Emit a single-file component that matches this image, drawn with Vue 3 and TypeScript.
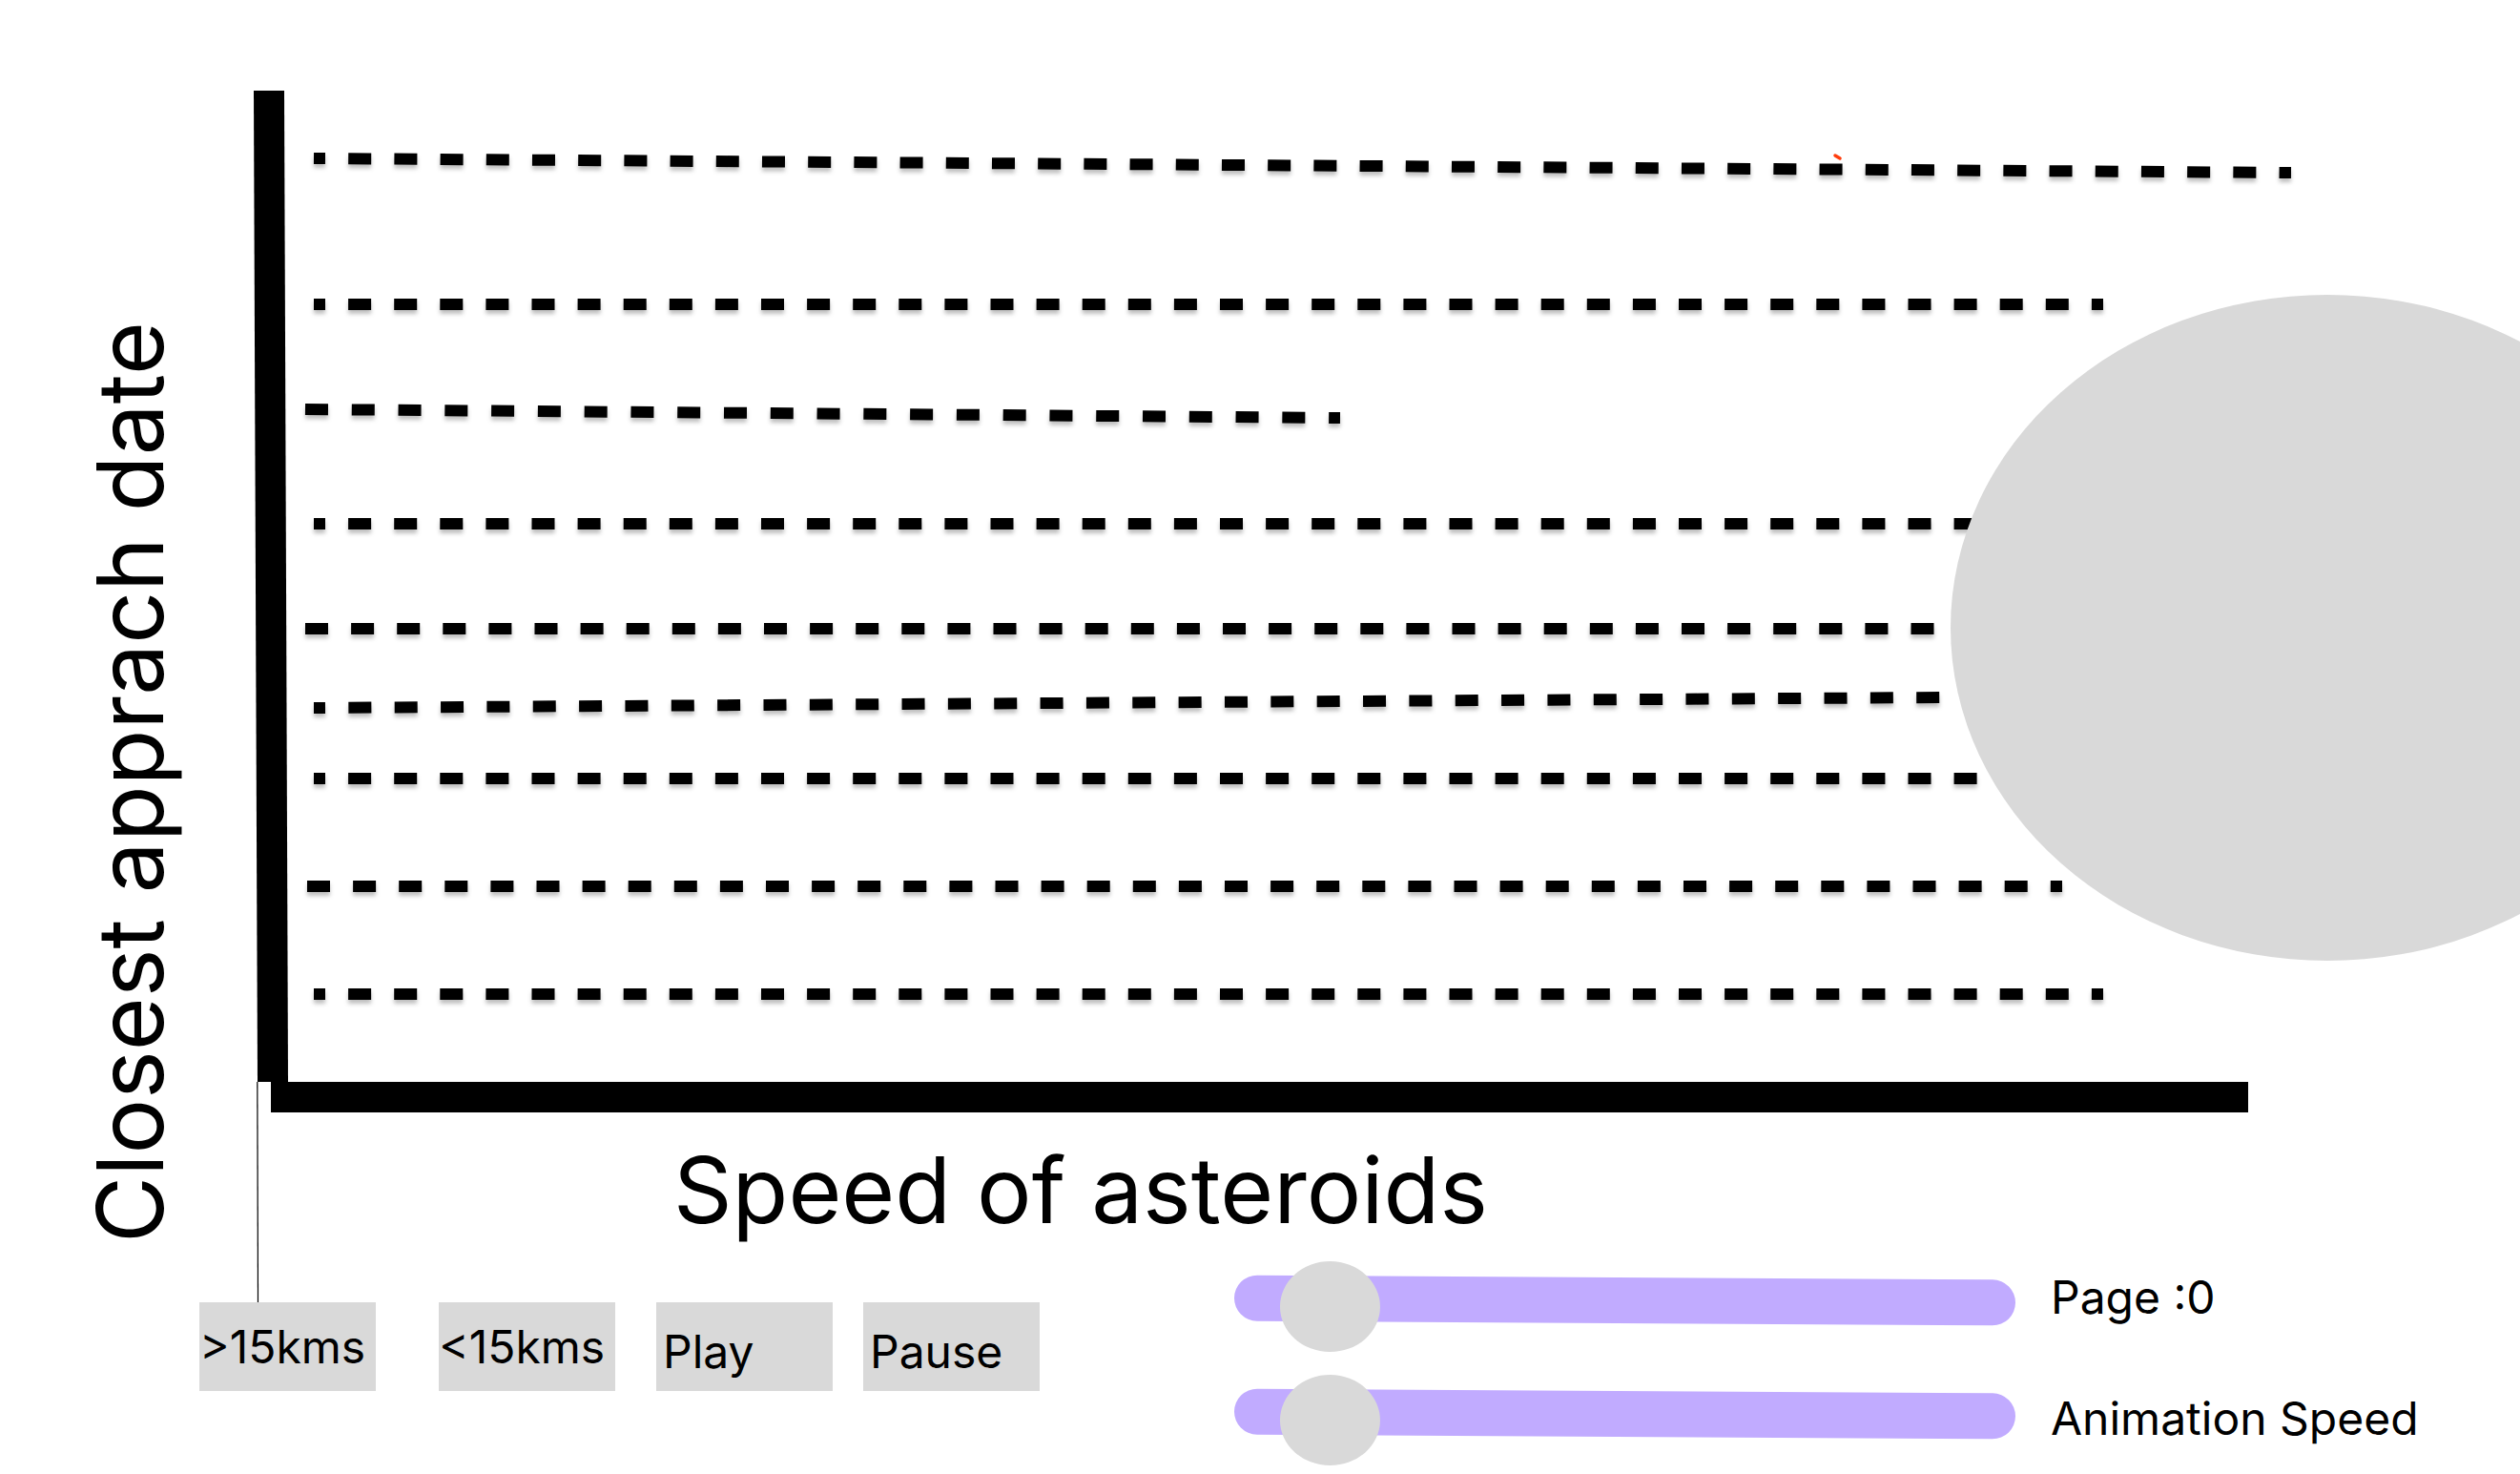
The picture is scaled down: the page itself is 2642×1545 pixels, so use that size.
<script setup lang="ts">
import { ref } from 'vue'

interface Track {
  x1: number
  y1: number
  x2: number
  y2: number
  period: number
  halfStart: boolean
}

const DASH = 24

const tracks: Track[] = [
  { x1: 329, y1: 166, x2: 2402, y2: 181, period: 48.2, halfStart: true },
  { x1: 329, y1: 319, x2: 2205, y2: 319, period: 48.1, halfStart: true },
  { x1: 320, y1: 429, x2: 1405, y2: 438, period: 48.78, halfStart: false },
  { x1: 329, y1: 549, x2: 2205, y2: 549, period: 48.1, halfStart: true },
  { x1: 320, y1: 659, x2: 2064, y2: 659, period: 48.1, halfStart: false },
  { x1: 329, y1: 742, x2: 2034, y2: 731, period: 48.35, halfStart: true },
  { x1: 329, y1: 816, x2: 2205, y2: 816, period: 48.1, halfStart: true },
  { x1: 322, y1: 929, x2: 2162, y2: 929, period: 48.1, halfStart: false },
  { x1: 329, y1: 1042, x2: 2205, y2: 1042, period: 48.1, halfStart: true },
]

const page = ref(1)
const speed = ref(1)
</script>

<template>
  <main class="page">
    <div class="y-label"><p class="axis-text vertical">Closest apprach date</p></div>

    <svg class="plot" viewBox="209 95 2433 1071" role="img" aria-label="Asteroid tracks">
      <line x1="269.8" y1="1134" x2="270.5" y2="1365" stroke="#000" stroke-width="1.2" />
      <line x1="282" y1="95" x2="286" y2="1134" stroke="#000" stroke-width="32" />
      <rect x="284" y="1134" width="2073" height="32" />
      <g class="tracks">
        <line
          v-for="(t, i) in tracks"
          :key="i"
          :x1="t.x1"
          :y1="t.y1"
          :x2="t.x2"
          :y2="t.y2"
          :stroke-dasharray="`${DASH} ${t.period - DASH}`"
          :stroke-dashoffset="t.halfStart ? DASH / 2 : 0"
        />
      </g>
      <line x1="1924" y1="163" x2="1929" y2="166" stroke="#ff3d0d" stroke-width="3.5" stroke-linecap="round" />
      <ellipse cx="2440" cy="658" rx="395" ry="349" fill="#d9d9d9" />
    </svg>

    <p class="axis-text x-label">Speed of asteroids</p>

    <section class="controls">
      <div class="buttons">
        <button type="button" class="filter">&gt;15kms</button>
        <button type="button" class="filter second">&lt;15kms</button>
        <button type="button" class="playback play">Play</button>
        <button type="button" class="playback pause">Pause</button>
      </div>
      <div class="sliders">
        <input id="page" v-model.number="page" type="range" min="0" max="15" />
        <input id="speed" v-model.number="speed" type="range" min="0" max="15" />
      </div>
      <div class="labels">
        <label for="page">Page :0</label>
        <label for="speed">Animation Speed</label>
      </div>
    </section>
  </main>
</template>

<style>
body {
  background: #fff;
}
</style>

<style scoped>
.page {
  display: grid;
  grid-template-columns: 209px minmax(0, 1fr);
  padding: 95px 0 40px;
  overflow: hidden;
  color: #000;
  font-family: Inter, "Liberation Sans", sans-serif;
  font-optical-sizing: none;
}

.y-label {
  grid-row: 1 / 3;
  display: flex;
  align-items: flex-end;
  padding: 0 0 19px 78px;
}

.axis-text {
  margin: 0;
  font-size: 96px;
  line-height: 116px;
  white-space: nowrap;
}

.vertical {
  writing-mode: vertical-rl;
  transform: rotate(180deg);
}

.plot {
  display: block;
  width: 100%;
  height: auto;
  overflow: visible;
}

.tracks {
  stroke: #000;
  stroke-width: 12px;
  filter: drop-shadow(0 4px 2px rgba(0, 0, 0, 0.25));
}

.x-label {
  grid-column: 2;
  padding: 23px 0 17px 497px;
}

.controls {
  grid-column: 2;
  display: flex;
  align-items: flex-start;
}

.buttons {
  display: flex;
  margin: 43px 204px 0 0;
}

button {
  box-sizing: border-box;
  display: flex;
  align-items: flex-start;
  width: 185px;
  height: 93px;
  border: 0;
  border-radius: 0;
  background: #d9d9d9;
  color: inherit;
  font: 48px/58px Inter, "Liberation Sans", sans-serif;
  font-optical-sizing: none;
  cursor: pointer;
}

.filter {
  padding: 18px 0 0;
}

.playback {
  padding: 23px 0 0 7px;
}

.second {
  margin-left: 66px;
}

.play {
  margin-left: 43px;
}

.pause {
  margin-left: 32px;
}

.sliders {
  flex: 1;
  display: flex;
  flex-direction: column;
  gap: 71px;
  padding-top: 17px;
}

input {
  appearance: none;
  width: 100%;
  height: 48px;
  margin: 0;
  background: none;
  transform: rotate(0.35deg);
}

input::-webkit-slider-runnable-track {
  height: 48px;
  border-radius: 24px;
  background: #c1abff;
}

input::-webkit-slider-thumb {
  appearance: none;
  width: 105px;
  height: 95px;
  margin-top: -15px;
  border-radius: 50%;
  background: #d9d9d9;
}

.labels {
  display: flex;
  flex-direction: column;
  gap: 69px;
  box-sizing: border-box;
  width: 529px;
  padding: 9px 0 0 37px;
  font-size: 48px;
  line-height: 58px;
  white-space: nowrap;
}
</style>
